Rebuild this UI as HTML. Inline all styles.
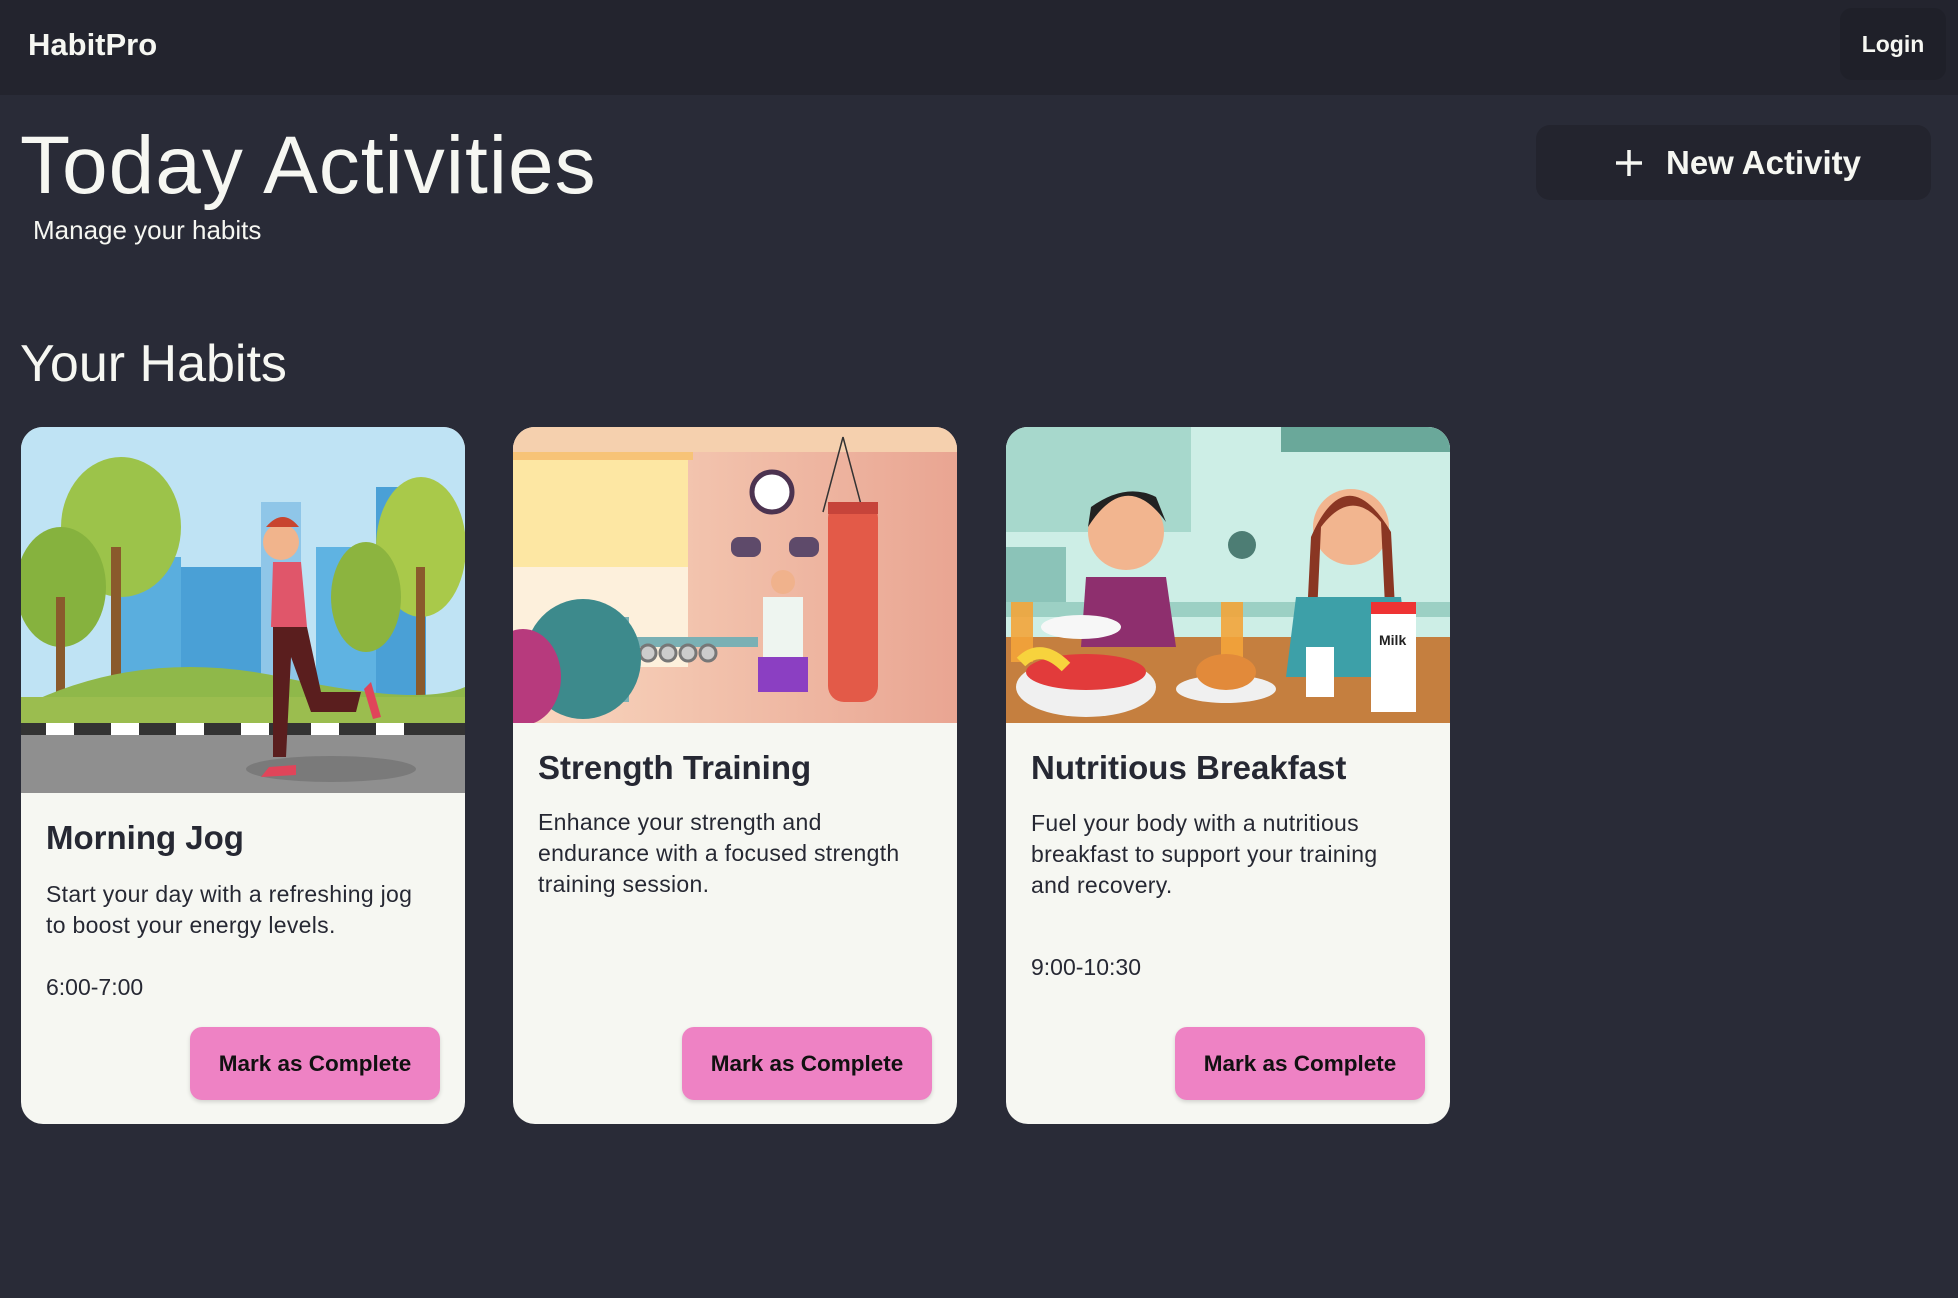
<!DOCTYPE html>
<html><head><meta charset="utf-8"><style>
*{margin:0;padding:0;box-sizing:border-box}
body{width:1958px;height:1298px;background:#292b37;font-family:"Liberation Sans",sans-serif;color:#f6f7f2;position:relative;overflow:hidden}
.hdr{position:absolute;left:0;top:0;width:1958px;height:95px;background:#23242e}
.logo{position:absolute;left:28px;top:27px;font-size:31px;font-weight:bold}
.login{position:absolute;left:1840px;top:8px;width:106px;height:72px;background:#1f2029;border-radius:12px;font-weight:bold;font-size:23px;text-align:center;line-height:72px}
h1{position:absolute;left:20px;top:119px;font-size:82px;font-weight:normal;letter-spacing:1px}
.sub{position:absolute;left:33px;top:215px;font-size:26px}
.newbtn{position:absolute;left:1536px;top:125px;width:395px;height:75px;background:#23242e;border-radius:14px;font-weight:bold;font-size:33px;line-height:75px}
.newbtn span{position:absolute;left:130px}
h2{position:absolute;left:20px;top:334px;font-size:52px;font-weight:normal}
.card{position:absolute;top:427px;width:444px;height:697px;background:#f6f7f2;border-radius:22px;overflow:hidden;color:#262833}
.card svg{position:absolute;left:0;top:0}
.t{position:absolute;left:25px;font-size:33px;font-weight:bold}
.d{position:absolute;left:25px;width:385px;font-size:23px;line-height:31px;letter-spacing:.3px}
.tm{position:absolute;left:25px;font-size:23px}
.btn{position:absolute;left:169px;top:600px;width:250px;height:73px;background:#ee82c4;border-radius:12px;color:#111;font-weight:bold;font-size:22.5px;text-align:center;line-height:73px;box-shadow:0 2px 4px rgba(0,0,0,.15)}
</style></head><body>
<div class="hdr"><div class="logo">HabitPro</div><div class="login">Login</div></div>
<h1>Today Activities</h1>
<div class="sub">Manage your habits</div>
<div class="newbtn"><svg style="position:absolute;left:79px;top:24px" width="28" height="28" viewBox="0 0 28 28"><path d="M14 1V27M1 14H27" stroke="#f6f7f2" stroke-width="3.5"/></svg><span>New Activity</span></div>
<h2>Your Habits</h2>

<div class="card" style="left:21px">
<svg width="444" height="366" viewBox="0 0 444 366">
<rect width="444" height="366" fill="#bfe3f4"/>
<rect x="90" y="130" width="70" height="150" fill="#5aaede"/><rect x="160" y="140" width="80" height="140" fill="#4aa0d6"/><rect x="295" y="120" width="60" height="160" fill="#5fb3e2"/><rect x="355" y="60" width="50" height="220" fill="#4aa0d6"/><rect x="240" y="75" width="40" height="200" fill="#8fc6e8"/>
<ellipse cx="100" cy="100" rx="60" ry="70" fill="#9cc34a"/><ellipse cx="40" cy="160" rx="45" ry="60" fill="#86b23e"/><rect x="90" y="120" width="10" height="200" fill="#8a5a2c"/><rect x="35" y="170" width="9" height="150" fill="#8a5a2c"/>
<ellipse cx="400" cy="120" rx="45" ry="70" fill="#a9c94a"/><ellipse cx="345" cy="170" rx="35" ry="55" fill="#8cb43f"/><rect x="395" y="140" width="9" height="170" fill="#8a5a2c"/>
<path d="M0 280 Q120 220 260 250 T444 260 V300 H0Z" fill="#8fb84a"/><rect y="270" width="444" height="30" fill="#9bbd4f"/>
<rect y="296" width="444" height="12" fill="#333"/>
<g fill="#fff"><rect x="25" y="296" width="28" height="12"/><rect x="90" y="296" width="28" height="12"/><rect x="155" y="296" width="28" height="12"/><rect x="220" y="296" width="28" height="12"/><rect x="290" y="296" width="28" height="12"/><rect x="355" y="296" width="28" height="12"/></g>
<rect y="308" width="444" height="58" fill="#8f8f8f"/><ellipse cx="310" cy="342" rx="85" ry="13" fill="#7a7a7a"/>
<circle cx="260" cy="115" r="18" fill="#f1b48c"/><path d="M245 100 Q262 80 278 100 Z" fill="#c8452f"/>
<path d="M252 135 L280 135 L286 200 L250 200Z" fill="#e0566a"/><path d="M252 200 L286 200 L300 265 L340 265 L335 285 L290 285 L270 230 L265 330 L252 330Z" fill="#5a1e1e"/>
<path d="M248 340 L275 338 L275 348 L240 350Z" fill="#e0455a"/><path d="M350 255 L360 290 L352 292 L343 262Z" fill="#e0455a"/>
</svg>
<div class="t" style="top:392px">Morning Jog</div>
<div class="d" style="top:452px">Start your day with a refreshing jog to boost your energy levels.</div>
<div class="tm" style="top:547px">6:00-7:00</div>
<div class="btn">Mark as Complete</div>
</div>

<div class="card" style="left:513px">
<svg width="444" height="296" viewBox="0 0 444 296">
<defs><linearGradient id="g2" x1="0" x2="1"><stop offset="0" stop-color="#f9d8c0"/><stop offset="1" stop-color="#e9a592"/></linearGradient></defs>
<rect width="444" height="296" fill="url(#g2)"/><rect width="444" height="25" fill="#f5d0ae"/>
<rect x="0" y="30" width="175" height="110" fill="#fde7a3"/><rect x="0" y="140" width="175" height="100" fill="#fdf0dc"/>
<rect x="0" y="25" width="180" height="8" fill="#f7c377"/>
<circle cx="259" cy="65" r="20" fill="#fff" stroke="#4c3350" stroke-width="5"/>
<path d="M330 10 L310 85 M330 10 L350 85" stroke="#333" stroke-width="1.5"/><rect x="315" y="75" width="50" height="200" rx="16" fill="#e35a48"/><rect x="315" y="75" width="50" height="12" fill="#c6443a"/>
<rect x="218" y="110" width="30" height="20" rx="8" fill="#5e4a6a"/><rect x="276" y="110" width="30" height="20" rx="8" fill="#5e4a6a"/>
<circle cx="270" cy="155" r="12" fill="#f0b28c"/><rect x="250" y="170" width="40" height="60" fill="#eef5f0"/><rect x="245" y="230" width="50" height="35" fill="#8b3fc2"/>
<rect x="115" y="210" width="130" height="10" fill="#7ab0b4"/><rect x="110" y="190" width="6" height="85" fill="#7ab0b4"/>
<g fill="#ccc" stroke="#777" stroke-width="3"><circle cx="135" cy="226" r="8"/><circle cx="155" cy="226" r="8"/><circle cx="175" cy="226" r="8"/><circle cx="195" cy="226" r="8"/></g>
<ellipse cx="70" cy="232" rx="58" ry="60" fill="#3d8a8c"/><ellipse cx="10" cy="250" rx="38" ry="48" fill="#b73a7d"/>
</svg>
<div class="t" style="top:322px">Strength Training</div>
<div class="d" style="top:380px">Enhance your strength and endurance with a focused strength training session.</div>
<div class="btn">Mark as Complete</div>
</div>

<div class="card" style="left:1006px">
<svg width="444" height="296" viewBox="0 0 444 296">
<rect width="444" height="296" fill="#cdeee6"/>
<rect x="0" y="0" width="185" height="105" fill="#a7d8cc"/><rect x="275" y="0" width="169" height="25" fill="#6aa89a"/>
<rect x="0" y="120" width="60" height="60" fill="#8bc3b8"/><rect y="175" width="444" height="15" fill="#9cd0c4"/>
<circle cx="236" cy="118" r="14" fill="#4d7d74"/>
<path d="M0 210 H444 V296 H0Z" fill="#c57f3f"/>
<circle cx="120" cy="105" r="38" fill="#f2b58f"/><path d="M82 100 Q120 40 160 95 L150 70 Q120 55 85 80Z" fill="#222"/>
<path d="M80 150 L160 150 L170 220 L75 220Z" fill="#8e2f6e"/>
<circle cx="345" cy="100" r="38" fill="#f2b58f"/><path d="M305 110 Q340 30 385 105 L390 200 L380 200 L375 95 Q345 60 315 100 L310 210 L300 210Z" fill="#8a3623"/>
<path d="M290 170 L395 170 L405 250 L280 250Z" fill="#3da0a8"/>
<rect x="365" y="175" width="45" height="110" fill="#fff"/><rect x="365" y="175" width="45" height="12" fill="#e33"/><text x="373" y="218" font-size="14" font-weight="bold" fill="#222" font-family="Liberation Sans">Milk</text>
<rect x="5" y="175" width="22" height="60" fill="#f3a43a" opacity=".9"/><rect x="215" y="175" width="22" height="55" fill="#f3a43a" opacity=".9"/><rect x="300" y="220" width="28" height="50" fill="#fff"/>
<ellipse cx="80" cy="260" rx="70" ry="30" fill="#f0f0f0"/><ellipse cx="80" cy="245" rx="60" ry="18" fill="#e23b3b"/><path d="M15 235 Q35 215 60 240" stroke="#f7d33d" stroke-width="12" fill="none"/>
<ellipse cx="220" cy="262" rx="50" ry="14" fill="#f0f0f0"/><ellipse cx="220" cy="245" rx="30" ry="18" fill="#e28a3a"/>
<ellipse cx="75" cy="200" rx="40" ry="12" fill="#f7f7f7"/>
</svg>
<div class="t" style="top:322px">Nutritious Breakfast</div>
<div class="d" style="top:381px">Fuel your body with a nutritious breakfast to support your training and recovery.</div>
<div class="tm" style="top:527px">9:00-10:30</div>
<div class="btn">Mark as Complete</div>
</div>
</body></html>
